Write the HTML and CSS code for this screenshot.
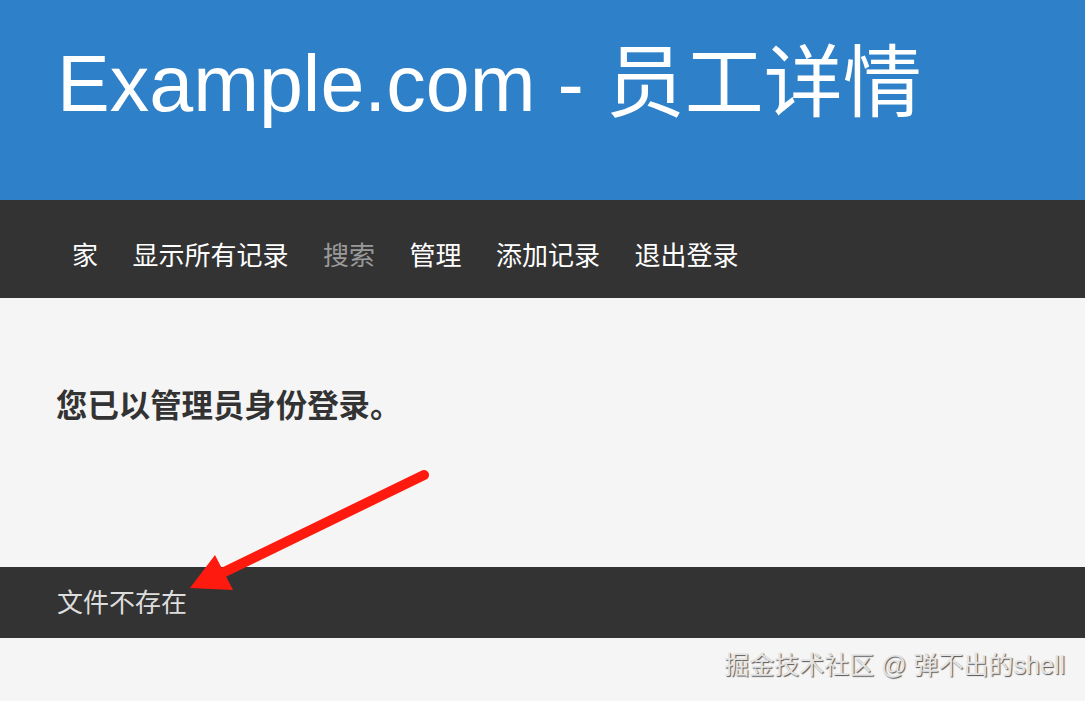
FILE: index.html
```html
<!DOCTYPE html>
<html lang="zh-CN">
<head>
    <meta charset="UTF-8">
    <meta name="viewport" content="width=device-width, initial-scale=1.0">
    <title>Example.com - 员工详情</title>
    <link rel="stylesheet" href="styles.css">
</head>
<body>
    <header class="site-header">
        <h1>Example.com - 员工详情</h1>
    </header>

    <nav class="main-nav">
        <a href="#">家</a>
        <a href="#">显示所有记录</a>
        <a href="#" class="current">搜索</a>
        <a href="#">管理</a>
        <a href="#">添加记录</a>
        <a href="#">退出登录</a>
    </nav>

    <main class="content">
        <h2>您已以管理员身份登录。</h2>
    </main>

    <footer class="site-footer">
        <p>文件不存在</p>
    </footer>

    <div class="watermark">掘金技术社区 @ 弹不出的shell</div>

    <svg class="arrow" width="1085" height="701" viewBox="0 0 1085 701">
        <line x1="424" y1="475" x2="212" y2="578" stroke="#ff1a0f" stroke-width="10" stroke-linecap="round"/>
        <polygon points="190,588 215,555 233,590" fill="#ff1a0f"/>
    </svg>
</body>
</html>
```

FILE: styles.css
```css
body {
    margin: 0;
    font-family: "Liberation Sans", "Noto Sans CJK SC", Arial, sans-serif;
    background: #f5f5f5;
    position: relative;
}
.site-header {
    background: #2e80c8;
    height: 200px;
    box-sizing: border-box;
    padding: 38px 57px 0;
}
.site-header h1 {
    margin: 0;
    color: #fff;
    font-weight: normal;
    font-size: 79px;
    line-height: 92px;
}
.main-nav {
    background: #333;
    height: 98px;
    display: flex;
    align-items: center;
    gap: 34.5px;
    padding: 8px 0 0 72px;
    box-sizing: border-box;
}
.main-nav a {
    color: #fff;
    text-decoration: none;
    font-size: 26px;
}
.main-nav a.current {
    color: #999;
}
.content {
    height: 269px;
    box-sizing: border-box;
    padding: 88px 56px 0;
}
.content h2 {
    margin: 0;
    font-size: 31.4px;
    line-height: 42px;
    color: #333;
}
.site-footer {
    background: #333;
    height: 71px;
    box-sizing: border-box;
    padding: 19px 57px 0;
}
.site-footer p {
    margin: 0;
    color: #ddd;
    font-size: 26px;
    line-height: 34px;
}
.watermark {
    text-align: right;
    padding: 10px 20px 0 0;
    font-size: 25px;
    line-height: 34px;
    color: #e4e4e4;
    text-shadow: 1px 1px 1px #555;
}
.arrow {
    position: absolute;
    top: 0;
    left: 0;
    pointer-events: none;
}
```
